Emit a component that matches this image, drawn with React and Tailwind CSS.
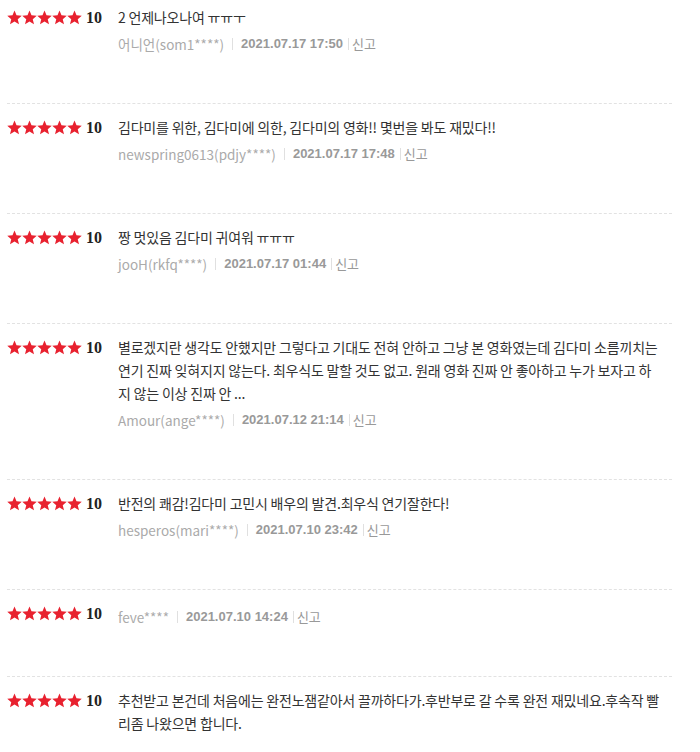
import React from "react";

const reviews = [
  { text: "2 언제나오나여 ㅠㅠㅜ", user: "어니언(som1****)", date: "2021.07.17 17:50" },
  { text: "김다미를 위한, 김다미에 의한, 김다미의 영화!! 몇번을 봐도 재밌다!!", user: "newspring0613(pdjy****)", date: "2021.07.17 17:48" },
  { text: "짱 멋있음 김다미 귀여워 ㅠㅠㅠ", user: "jooH(rkfq****)", date: "2021.07.17 01:44" },
  {
    text: "별로겠지란 생각도 안했지만 그렇다고 기대도 전혀 안하고 그냥 본 영화였는데 김다미 소름끼치는 연기 진짜 잊혀지지 않는다. 최우식도 말할 것도 없고. 원래 영화 진짜 안 좋아하고 누가 보자고 하지 않는 이상 진짜 안 ...",
    user: "Amour(ange****)",
    date: "2021.07.12 21:14",
  },
  { text: "반전의 쾌감!김다미 고민시 배우의 발견.최우식 연기잘한다!", user: "hesperos(mari****)", date: "2021.07.10 23:42" },
  { text: "", user: "feve****", date: "2021.07.10 14:24" },
  {
    text: "추천받고 본건데 처음에는 완전노잼같아서 끌까하다가.후반부로 갈 수록 완전 재밌네요.후속작 빨리좀 나왔으면 합니다.",
    user: "",
    date: "",
  },
];

function Star() {
  return (
    <svg width="15" height="15" viewBox="0 0 24 24" className="shrink-0">
      <path
        fill="#e8212f"
        d="M12 .8l3.2 7.7 8.4.7-6.4 5.4 2 8.2-7.2-4.5-7.2 4.5 2-8.2L.4 9.2l8.4-.7z"
      />
    </svg>
  );
}

export default function App() {
  return (
    <div
      className="bg-white w-[700px] h-[752px] overflow-hidden"
      style={{ fontFamily: "'Noto Sans CJK KR', 'Noto Sans', sans-serif" }}
    >
      <ul className="ml-[7px] w-[665px]">
        {reviews.map((r, i) => (
          <li
            key={i}
            className="flex pt-[12px] pb-[50px] first:pt-[6px] border-b border-dashed border-[#e2e2e2]"
          >
            <div className="w-[111px] shrink-0 flex items-center h-[23px]">
              <Star />
              <Star />
              <Star />
              <Star />
              <Star />
              <span className="ml-[4px] text-[16px] font-bold text-[#222] font-['Liberation_Serif',serif]">
                10
              </span>
            </div>
            <div className="flex-1 pr-[10px]">
              {r.text && (
                <p className="text-[14px] leading-[23px] text-[#333] tracking-[-0.2px]">{r.text}</p>
              )}
              {r.user && (
                <div className="mt-[6px] flex items-center text-[13.5px] leading-[18px] text-[#aaa]">
                  <span>{r.user}</span>
                  <span className="mx-[8px] w-px h-[12px] bg-[#e0e0e0]" />
                  <span className="text-[13px] font-['Liberation_Sans',sans-serif] font-bold text-[#999]">{r.date}</span>
                  <span className="ml-[5px] mr-[3px] w-px h-[12px] bg-[#e0e0e0]" />
                  <span className="text-[13px] text-[#999]">신고</span>
                </div>
              )}
            </div>
          </li>
        ))}
      </ul>
    </div>
  );
}
